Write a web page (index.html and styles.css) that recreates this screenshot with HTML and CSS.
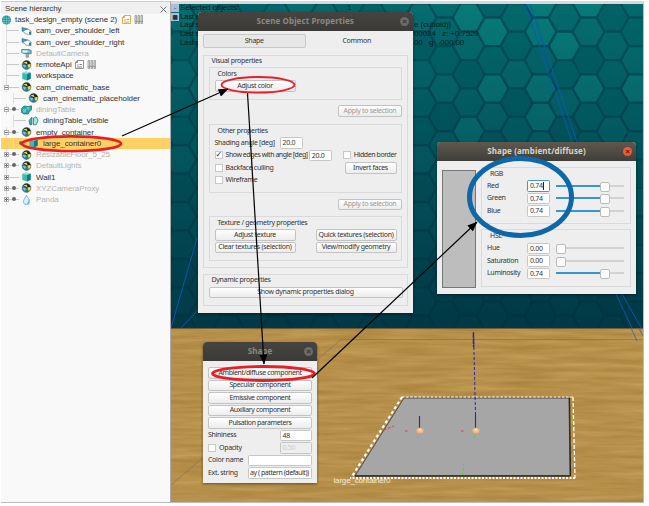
FILE: index.html
```html
<!DOCTYPE html>
<html lang="en">
<head>
<meta charset="utf-8">
<title>Scene editor</title>
<link rel="stylesheet" href="styles.css">
</head>
<body>
<svg class="defs" width="0" height="0" aria-hidden="true">
  <defs>
    <symbol id="cam" viewBox="0 0 11 10"><path d="M1 1.500l6 1.500v4.500L1 5z" fill="#35a9c4" stroke="#226" stroke-width=".4"/><path d="M1.500 5L5 8l5 .6V5L7 3z" fill="#fff" stroke="#246" stroke-width=".5"/><path d="M8 5.500l2 .3v2.500l-2-.4z" fill="#178aa5"/></symbol>
    <symbol id="cam2" viewBox="0 0 11 10"><path d="M.7 1.500h7.500l2 1v3.200H3L.7 4.500z" fill="#69bfcb" stroke="#357" stroke-width=".6"/><path d="M1.500 2.500h5v2h-5z" fill="#e9ffff"/><path d="M5 5.600h2.500v3.700H5z" fill="#aaa" stroke="#555" stroke-width=".4"/></symbol>
    <symbol id="dummy" viewBox="0 0 11 10"><circle cx="5.500" cy="5" r="4.400" fill="#277d96"/><path d="M2 2.300A4.400 4.400 0 0 1 9.700 4L5.500 5.300z" fill="#222"/><path d="M2.500 2.500l3-.9 1.200 3z" fill="#ffe02e"/><path d="M6.500 4.500l3.200-.6v3l-2 1z" fill="#ffe02e"/><path d="M1.200 5l4 .3L4 8z" fill="#7cc8de"/><circle cx="5.500" cy="5" r="4.400" fill="none" stroke="#345" stroke-width=".5"/></symbol>
    <symbol id="cube" viewBox="0 0 11 10"><path d="M1.300 2L5 .6l4.700 1.200v6L6 9.600 1.300 8z" fill="#3bb9b3"/><path d="M1.300 2L5 .6l4.700 1.200L6 3z" fill="#92e5dc"/><path d="M6 3l3.700-1.200v6L6 9.600z" fill="#167b7e"/></symbol>
    <symbol id="multi" viewBox="0 0 11 10"><path d="M.5 3.500L3 1l4 .5 3.500-.7v4L8 7 7.500 9H3L.5 7.500z" fill="#2ba7a2" stroke="#155" stroke-width=".6"/><path d="M2 4h3v3.500H2zM5.500 2h3v2.500h-3z" fill="#5fccc4"/></symbol>
    <symbol id="mesh" viewBox="0 0 11 10"><path d="M1 4.500L4 1v7.500L2 9z" fill="#37b7b3" stroke="#155" stroke-width=".6"/><path d="M5.500 2L8 .8 10 4 8.500 8.500l-3 .5z" fill="#9ae8e0" stroke="#155" stroke-width=".6"/></symbol>
    <symbol id="drop" viewBox="0 0 11 10"><path d="M5.500.3C7 3 8.600 4.600 8.600 6.600a3.100 3.100 0 0 1-6.200 0C2.400 4.600 4.500 3 5.500.3z" fill="#d8f0fa" stroke="#4aa5d0" stroke-width=".7"/><path d="M6.500 4.500c1.500 2 .5 4-1 4.300 2.600.3 3.200-2 1-4.300z" fill="#2f8fc0"/></symbol>
    <symbol id="globe" viewBox="0 0 11 10"><circle cx="5.500" cy="5" r="4.500" fill="#128c95"/><path d="M1.500 3.300h8M1 5.500h9M2 7.700h7M5.500.5v9M3.500 1q-1.500 4 0 8M7.500 1q1.500 4 0 8" stroke="#8fdcdc" stroke-width=".5" fill="none"/></symbol>
    <symbol id="script" viewBox="0 0 9 9"><path d="M.5 2.500l2-2h6v8h-8z" fill="#fff" stroke="currentColor" stroke-width=".8"/><path d="M2.500.5v2h-2M2 5h1.500M4.500 4.500H7M2 7h5" stroke="currentColor" stroke-width=".9" fill="none"/></symbol>
    <symbol id="bars" viewBox="0 0 9 9"><path d="M1 .5h1.600v8H1zM4 .5h1.600v8H4zM7 .5h1.600v8H7z" fill="#ddd" stroke="#777" stroke-width=".6"/><path d="M.7 6.500h8" stroke="#777" stroke-width=".5"/></symbol>
    <filter id="grain" x="0" y="0" width="100%" height="100%" color-interpolation-filters="sRGB">
      <feTurbulence type="fractalNoise" baseFrequency=".018 .22" numOctaves="4" seed="7"/>
      <feColorMatrix values=".13 0 0 0 .65  .14 0 0 0 .495  .13 0 0 0 .225  0 0 0 0 1"/>
    </filter>
    <linearGradient id="wallshade" x1="0" y1="0" x2="0" y2="1"><stop offset="0" stop-color="#002c3c" stop-opacity="0"/><stop offset=".4" stop-color="#002c3c" stop-opacity=".32"/><stop offset="1" stop-color="#002c3c" stop-opacity=".8"/></linearGradient>
    <marker id="tip" viewBox="0 0 10 8" refX="9.500" refY="4" markerWidth="10" markerHeight="8" markerUnits="userSpaceOnUse" orient="auto"><path d="M0 0l10 4-10 4z" fill="#000" stroke="none"/></marker>
  </defs>
</svg>
<main class="app">
  <aside class="panel">
    <header class="panel-head"><span>Scene hierarchy</span><svg width="7" height="7" viewBox="0 0 7 7"><path d="M.5.5l6 6M6.500.5l-6 6" stroke="#555" stroke-width=".8"/></svg></header>
    <ul class="tree">
      <li class="root"><svg class="ico"><use href="#globe"/></svg><span>task_design_empty (scene 2)</span><svg class="tag gold"><use href="#script"/></svg><svg class="tag"><use href="#bars"/></svg></li>
      <li><i class="stem"></i><svg class="ico"><use href="#cam"/></svg><span>cam_over_shoulder_left</span></li>
      <li><i class="stem"></i><svg class="ico"><use href="#cam"/></svg><span>cam_over_shoulder_right</span></li>
      <li class="dim"><i class="stem"></i><svg class="ico"><use href="#cam2"/></svg><span>DefaultCamera</span></li>
      <li><i class="stem"></i><svg class="ico"><use href="#dummy"/></svg><span>remoteApi</span><svg class="tag"><use href="#script"/></svg><svg class="tag"><use href="#bars"/></svg></li>
      <li><i class="stem"></i><svg class="ico"><use href="#cube"/></svg><span>workspace</span></li>
      <li><i class="stem box minus"></i><svg class="ico"><use href="#dummy"/></svg><span>cam_cinematic_base</span></li>
      <li class="child"><i class="stem"></i><svg class="ico"><use href="#dummy"/></svg><span>cam_cinematic_placeholder</span></li>
      <li class="dim"><i class="stem box minus dot"></i><svg class="ico"><use href="#multi"/></svg><span>diningTable</span></li>
      <li class="child"><i class="stem"></i><svg class="ico"><use href="#mesh"/></svg><span>diningTable_visible</span></li>
      <li><i class="stem box minus dot"></i><svg class="ico"><use href="#dummy"/></svg><span>empty_container</span></li>
      <li class="child selected"><i class="stem dot"></i><svg class="ico"><use href="#cube"/></svg><span>large_container0</span></li>
      <li class="dim"><i class="stem box dot"></i><svg class="ico"><use href="#dummy"/></svg><span>ResizableFloor_5_25</span></li>
      <li class="dim"><i class="stem box dot"></i><svg class="ico"><use href="#dummy"/></svg><span>DefaultLights</span></li>
      <li><i class="stem box"></i><svg class="ico"><use href="#cube"/></svg><span>Wall1</span></li>
      <li class="dim"><i class="stem box dot"></i><svg class="ico"><use href="#dummy"/></svg><span>XYZCameraProxy</span></li>
      <li class="dim"><i class="stem box dot"></i><svg class="ico"><use href="#drop"/></svg><span>Panda</span></li>
    </ul>
  </aside>

  <section class="view">
    <svg class="scene" viewBox="171 4 472 498" width="472" height="498">
      <rect x="171" y="4" width="472" height="325" fill="#00585f"/>
      <g id="hexes" stroke="#005059" stroke-width="2.200"></g>
      <rect x="171" y="4" width="472" height="325" fill="url(#wallshade)"/>
      <g stroke="#0d58b8" stroke-width=".9" fill="none">
        <path d="M525 4L573 145M530 4L578 145M616 294l22 47M622 294l21 37M252 4l-8 10M281 4l-6 10M197 238l-26 90M198 310l-17 18"/>
      </g>
      <rect x="171" y="328" width="472" height="174" filter="url(#grain)"/>
      <path d="M171 328.200h472" stroke="#3c301c" stroke-width=".8"/>
      <path d="M643 339.500H341L171 485" fill="none" stroke="#85795b" stroke-width=".8"/>
      <path d="M631 328l6 13M639 328l4 8" stroke="#376f9e" stroke-width=".9"/>
      <path d="M404 398h165l1 78H355z" fill="#a6a6a6" stroke="#444" stroke-width=".9"/>
      <path d="M569.500 398l1 78" stroke="#252525" stroke-width="1.200"/>
      <path d="M355 475.800h215" stroke="#252525" stroke-width="1.200"/>
      <g fill="none" stroke="#fff">
        <path d="M402 397h171" stroke-width="1.200" stroke-dasharray="2.500 1.600"/>
        <path d="M573 397l2 81" stroke-width="1.300" stroke-dasharray="4 2"/>
        <path d="M575 478H350" stroke-width="2" stroke-dasharray="2 1.500"/>
        <path d="M402 397l-51 81" stroke-width="2.200" stroke-dasharray="3 2.600"/>
      </g>
      <g stroke="#2a20c0">
        <path d="M473.500 332l2 82" stroke-width="1" stroke-dasharray="3 2"/>
        <path d="M473.400 333l.2 14" stroke-width="1.500" stroke-dasharray="5 1"/>
        <path d="M475.500 414v15M419.500 416v13" stroke-width="1.100"/>
      </g>
      <g fill="#efb889" stroke="#c79362" stroke-width=".4"><ellipse cx="420" cy="430.700" rx="3.800" ry="2.900"/><ellipse cx="476" cy="430.700" rx="3.800" ry="2.900"/></g>
      <g fill="#ffd9b0"><circle cx="420" cy="430" r="1.400"/><circle cx="476" cy="430" r="1.400"/></g>
      <path d="M384 430l10-4M405 431h3M461 431h3" stroke="#cf4038" stroke-width="1" stroke-dasharray="2.500 2"/>
      <path d="M464 463l-1.500 12M417.500 436v2M474.500 436v2" stroke="#43d043" stroke-width="1" stroke-dasharray="3 2"/>
      <text class="scene-label" x="333.500" y="482.500" textLength="57">large_container0</text>
    </svg>
    <div class="toggles"><b>-</b><b>■</b></div>
    <div class="info">
      <p class="count"><span>Selected objects:</span><span>1</span></p>
      <p><span>Last s</span></p>
      <p><span>Last s</span><span class="end">e (cuboid))</span></p>
      <p><span>Last s</span><span class="end">00024&nbsp;&nbsp; z: +0.7520</span></p>
      <p><span>Last s</span><span class="end">00&nbsp;&nbsp; g: -000.00</span></p>
    </div>
  </section>

  <section class="win props">
    <header><span>Scene Object Properties</span><i class="close"></i></header>
    <div class="body">
      <nav><span class="tab on">Shape</span><span class="tab">Common</span></nav>
      <div class="group visual">
        <h2>Visual properties</h2>
        <div class="group colors"><h3>Colors</h3><span class="btn">Adjust color</span></div>
        <span class="btn apply">Apply to selection</span>
        <div class="group other">
          <h3>Other properties</h3>
          <div class="row"><label>Shading angle [deg]</label><span class="field shade">20.0</span></div>
          <div class="row"><i class="check on"></i><label class="edges">Show edges with angle [deg]</label><span class="field">20.0</span><i class="check second"></i><label class="hidden-border">Hidden border</label></div>
          <div class="row"><i class="check"></i><label>Backface culling</label><span class="btn invert">Invert faces</span></div>
          <div class="row"><i class="check"></i><label>Wireframe</label></div>
        </div>
        <span class="btn apply second-apply">Apply to selection</span>
        <div class="group texture">
          <h3>Texture / geometry properties</h3>
          <div class="pairs"><span class="btn">Adjust texture</span><span class="btn">Quick textures (selection)</span><span class="btn">Clear textures (selection)</span><span class="btn">View/modify geometry</span></div>
        </div>
      </div>
      <div class="group dynamic"><h2>Dynamic properties</h2><span class="btn">Show dynamic properties dialog</span></div>
    </div>
  </section>

  <section class="win mixer">
    <header><span>Shape (ambient/diffuse)</span><i class="close hot"></i></header>
    <div class="body">
      <div class="swatch"></div>
      <div class="channels">
        <div class="group"><h3>RGB</h3>
          <div class="row"><label>Red</label><span class="field focus">0.74</span><i class="slider"></i></div>
          <div class="row"><label>Green</label><span class="field">0.74</span><i class="slider"></i></div>
          <div class="row"><label>Blue</label><span class="field">0.74</span><i class="slider"></i></div>
        </div>
        <div class="group"><h3>HSL</h3>
          <div class="row"><label>Hue</label><span class="field">0.00</span><i class="slider zero"></i></div>
          <div class="row"><label>Saturation</label><span class="field">0.00</span><i class="slider zero"></i></div>
          <div class="row"><label>Luminosity</label><span class="field">0.74</span><i class="slider"></i></div>
        </div>
      </div>
    </div>
  </section>

  <section class="win shape">
    <header><span>Shape</span><i class="close"></i></header>
    <div class="body">
      <span class="btn">Ambient/diffuse component</span>
      <span class="btn">Specular component</span>
      <span class="btn">Emissive component</span>
      <span class="btn">Auxiliary component</span>
      <span class="btn">Pulsation parameters</span>
      <div class="row"><label>Shininess</label><span class="field">48</span></div>
      <div class="row"><i class="check"></i><label>Opacity</label><span class="field off">0.50</span></div>
      <div class="row"><label>Color name</label><span class="field long"></span></div>
      <div class="row"><label>Ext. string</label><span class="field long">ay ( pattern (default))</span></div>
    </div>
  </section>

  <svg class="notes" width="649" height="506" viewBox="0 0 649 506" fill="none">
    <g stroke="#ec1c24">
      <ellipse cx="71.500" cy="143.700" rx="49.500" ry="7.300" stroke-width="2.600"/>
      <ellipse cx="258" cy="84.800" rx="36.500" ry="7.800" stroke-width="1.800"/>
      <ellipse cx="263.500" cy="373.500" rx="51" ry="7" stroke-width="2.800"/>
    </g>
    <ellipse cx="520.500" cy="197" rx="51" ry="38.500" stroke="#0e67a6" stroke-width="5"/>
    <g stroke="#000" stroke-width="1.200">
      <path d="M122 136L228 89" marker-end="url(#tip)"/>
      <path d="M247.500 93L264 364" marker-end="url(#tip)"/>
      <path d="M312 378L477 222" marker-end="url(#tip)"/>
    </g>
  </svg>
</main>
<script src="hexes.js"></script>
</body>
</html>
```
FILE: hexes.js
```js
// Honeycomb wall: flat-topped tiles on a 24 x 28.4 lattice.
const wall = document.getElementById('hexes');
const shades = ['#02696c', '#00666a', '#056d70', '#016267', '#036a6e'];
const lit = new Set(['13,1', '15,1', '16,1', '15,3', '17,0', '13,3', '12,0', '15,0', '19,3', '17,3', '15,4', '12,4']);
for (let col = 0; col < 21; col++) {
  for (let row = -1; row < 13; row++) {
    const cx = 180.7 + col * 24;
    const cy = 3.5 + row * 28.4 + (col % 2 ? 0 : 14);
    const points = [[-16, 0], [-8, -14.2], [8, -14.2], [16, 0], [8, 14.2], [-8, 14.2]]
      .map(([x, y]) => `${(cx + x).toFixed(1)},${(cy + y).toFixed(1)}`).join(' ');
    const tile = document.createElementNS('http://www.w3.org/2000/svg', 'polygon');
    tile.setAttribute('points', points);
    tile.setAttribute('fill', lit.has(`${col},${row}`) ? '#077a79' : shades[(col * 7 + row * 11 + 22) % 5]);
    wall.append(tile);
  }
}
```
FILE: styles.css
```css
* { box-sizing: border-box; }
body { margin: 0; background: #fff; }
h2, h3, p, ul { margin: 0; padding: 0; font-weight: normal; font-size: inherit; }
.defs { position: absolute; }
.app { position: relative; width: 649px; height: 506px; display: flex; padding: 1px 0 0 1px; overflow: hidden; }

.panel { width: 170px; height: 502px; background: #f9f9f9; border-right: 1px solid #aaa; border-bottom: 1px solid #bbb; font: 8px/11.25px "Liberation Sans", sans-serif; letter-spacing: -.09px; color: #333; }
.panel-head { height: 13px; padding: 2px 3px 0 4px; display: flex; align-items: center; justify-content: space-between; background: #f0f0f0; border-top: 1px solid #ccc; }
.tree { list-style: none; }
.tree li { height: 11.25px; display: flex; align-items: center; white-space: nowrap; padding-left: 3px; }
.tree .root { padding-left: 0; }
.tree .child { padding-left: 10px; }
.tree .dim { color: #b4b4b4; }
.tree .selected { background: #ffd064; }
.ico { width: 11px; height: 10px; margin-right: 4px; flex: none; }
.root .ico { margin-right: 3px; }
.tag { width: 9px; height: 9px; margin-left: 3px; color: #777; }
.gold { color: #d29b1f; margin-left: 5px; }
.stem { width: 17px; height: 11.25px; flex: none; position: relative; background: linear-gradient(#c8c8c8, #c8c8c8) 3px 5px / 12px 1px no-repeat, linear-gradient(#ddd, #ddd) 2px 0 / 1px 100% no-repeat; }
.stem.box::before { content: ""; width: 5px; height: 5px; border: 1px solid #b0b0b0; background: linear-gradient(#777, #777) 0 1px / 3px 1px no-repeat, linear-gradient(#777, #777) 1px 0 / 1px 3px no-repeat, #fff; position: absolute; left: 0; top: 3px; box-sizing: border-box; }
.stem.minus::before { background: linear-gradient(#777, #777) 0 1px / 3px 1px no-repeat, #fff; }
.stem.dot::after { content: ""; width: 4px; height: 4px; border-radius: 50%; background: #666; position: absolute; left: 8px; top: 3px; }

.view { width: 473px; height: 502px; position: relative; border-top: 3px solid #d8d8d8; border-bottom: 1px solid #c5b9b9; border-right: 1px solid #bbb; }
.scene { display: block; }
.scene-label { font: 8px "Liberation Sans", sans-serif; fill: #f3ead8; }
.toggles { position: absolute; left: 0; top: 0; display: grid; gap: 1px; }
.toggles b { width: 8px; height: 8px; background: #a9bfdc; color: #234; font: 6px/8px "DejaVu Sans", sans-serif; text-align: center; }
.info { position: absolute; left: 9px; top: 0; width: 340px; font: 8px/8.700px "Liberation Sans", sans-serif; letter-spacing: -.1px; color: #06191c; white-space: nowrap; }
.info p { display: flex; height: 8.700px; }
.info p:not(.count) { letter-spacing: -.35px; }
.info span:first-child { width: 98px; }
.info .count span:first-child { width: 167px; }
.info .end { margin-left: 136px; letter-spacing: -.1px; }

.win { position: absolute; background: #eee; border-radius: 4px 4px 0 0; font: 7px/10px "Noto Sans", sans-serif; letter-spacing: -.3px; color: #333; white-space: nowrap; box-shadow: 0 1px 3px rgba(0,0,0,.45); }
.win header { height: 18.500px; border-radius: 4px 4px 0 0; background: linear-gradient(#454440, #3b3a37); color: #8c8982; font-weight: bold; font-size: 8px; letter-spacing: .1px; display: flex; align-items: center; justify-content: center; position: relative; }
.close { width: 9px; height: 9px; border-radius: 50%; background: #6e6b66; color: #333; position: absolute; right: 4px; top: 5px; }
.close::after { content: "×"; display: block; font: bold 8px/9px "Liberation Sans", sans-serif; text-align: center; letter-spacing: 0; }
.close.hot { background: #ec5b35; color: #5c1d0c; }
.group { border: 1px solid #dadada; }
.btn { display: flex; align-items: center; justify-content: center; height: 11.500px; border: 1px solid #c3c3c3; border-radius: 2px; background: linear-gradient(#fff, #ececec); }
.row { height: 12.500px; display: flex; align-items: center; }
.field { width: 23px; height: 11.500px; border: 1px solid #c6c6c6; border-radius: 1.500px; background: #fff; padding-left: 2px; line-height: 9.500px; overflow: hidden; flex: none; }
.field.off { background: #eee; color: #ccc; }
.field.focus { border-color: #4d94c4; }
.field.focus::after { content: ""; display: inline-block; width: 1px; height: 8px; background: #222; vertical-align: -2px; }
.check { width: 8px; height: 8px; border: 1px solid #c8c8c8; background: #fff; margin-right: 3px; flex: none; }
.check.on::after { content: "✓"; display: block; font: bold 8px/6px "DejaVu Sans", sans-serif; color: #111; letter-spacing: 0; }

.props { left: 197.500px; top: 12px; width: 215.500px; height: 300.500px; }
.props .body { padding: 3px 5px 0 5.500px; }
.props nav { display: grid; grid-template-columns: 1fr 1fr; height: 14.500px; }
.tab { display: flex; align-items: center; justify-content: center; }
.tab.on { border: 1px solid #c8c8c8; border-radius: 2px; background: #e7e7e7; }
.visual { margin-top: 7px; height: 213px; padding: 0 5px; }
.visual > h2 { height: 11px; padding-left: 2.500px; }
.colors { height: 33px; padding: 0 4.500px; }
.group h3 { padding-left: 3px; height: 12px; line-height: 11px; }
.colors .btn { width: 81px; }
.apply { width: 64px; margin: 5px 0 0 auto; color: #999; }
.other { margin-top: 7px; height: 69px; padding: 0 4.500px; }
.field.shade { margin-left: 9px; }
.other label { display: inline-block; }
.other .row label:first-child { width: 56px; }
.other .edges { width: 86px; letter-spacing: -.46px; }
.check.second { margin-left: 11px; }
.hidden-border { letter-spacing: -.42px; }
.invert { width: 52px; margin-left: auto; }
.second-apply { margin-top: 6px; }
.texture { margin-top: 6px; height: 45px; padding: 0 4.500px; }
.pairs { display: grid; grid-template-columns: 81px 81px; justify-content: space-between; row-gap: 1px; }
.dynamic { margin-top: 6px; height: 32px; padding: 0 4.500px; }
.dynamic h2 { height: 11.500px; padding-left: 3px; }

.mixer { left: 437px; top: 142px; width: 199px; height: 152px; }
.mixer header { background: linear-gradient(#5d594f, #403e39); color: #d9d5ca; }
.mixer .body { display: flex; gap: 5px; padding: 6px 5px 0; }
.swatch { width: 35px; height: 118px; margin-top: 3px; background: #bdbdbd; border: 1px solid #777; }
.channels { flex: 1; display: flex; flex-direction: column; gap: 5px; }
.channels .group { height: 57.500px; padding: 0 6px 0 5px; }
.channels .row label { width: 40px; }
.slider { width: 68px; height: 8px; margin-left: 6px; position: relative; background: linear-gradient(90deg, #3795d2 70%, #d2d2d2 70%) 0 3px / 100% 2px no-repeat; }
.slider.zero { background: linear-gradient(#d2d2d2, #d2d2d2) 0 3px / 100% 2px no-repeat; }
.slider::after { content: ""; position: absolute; left: 44px; top: 0; width: 8px; height: 8px; border: 1px solid #bbb; border-radius: 2px; background: #fcfcfc; }
.slider.zero::after { left: 0; }

.shape { left: 203px; top: 342px; width: 114px; height: 140.500px; }
.shape .body { padding: 6.500px 5px 0; display: grid; row-gap: 1px; }
.shape .row { height: 11.500px; }
.shape .btn { letter-spacing: -.38px; }
.shape .field { width: 32.500px; margin-left: auto; }
.shape .field.long { width: 64px; padding-left: 1px; letter-spacing: -.45px; }

.notes { position: absolute; left: 0; top: 0; }
```
